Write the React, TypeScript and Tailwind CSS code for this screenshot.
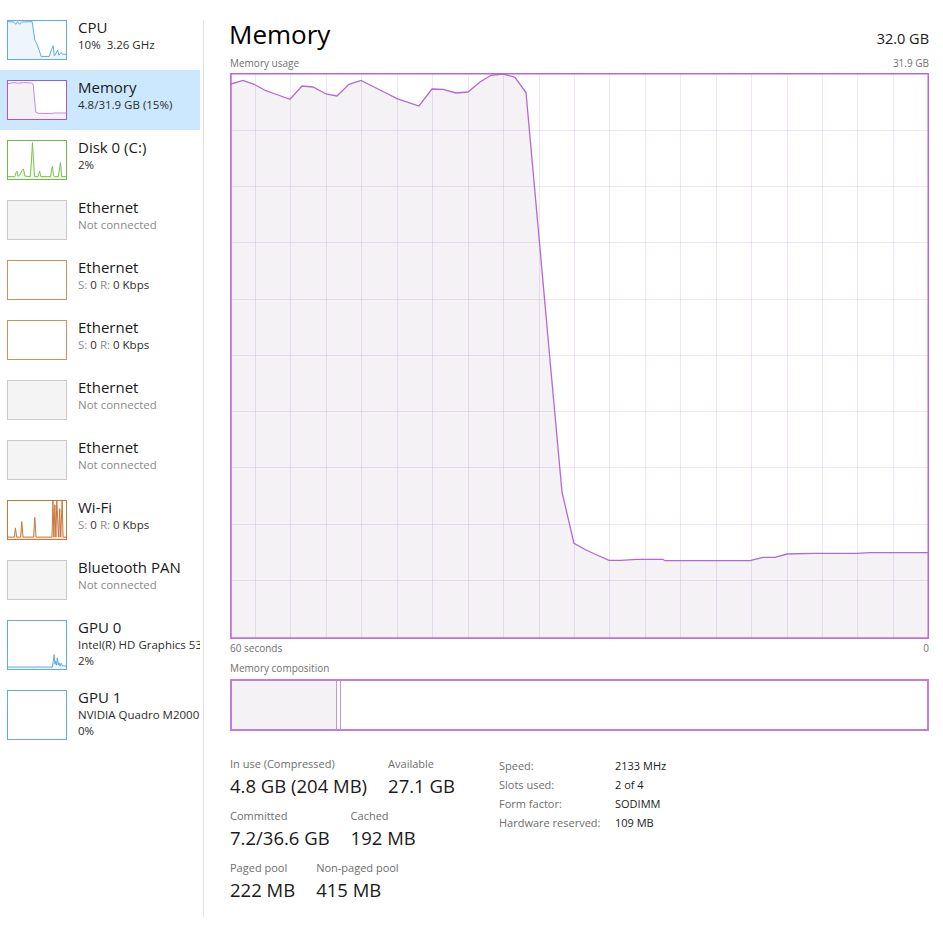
import React from 'react';

type Item = {
  title: string;
  sub: React.ReactNode[];
  box: string;
  h?: number;
  spark?: { points: string; line: string; fill: string };
  selected?: boolean;
};

const gray = 'text-[#8a8a8a]';

const SR = () => (
  <span>
    <span className={gray}>S:</span> 0 <span className={gray}>R:</span> 0 Kbps
  </span>
);

const items: Item[] = [
  {
    title: 'CPU',
    sub: ['10%  3.26 GHz'],
    box: 'border-[#62acdb] bg-white',
    spark: {
      points:
        '0,0.7 6,1 8,3.5 10,0.7 12,3.5 14,1 25,0.7 27.7,20 29.3,22.7 32,30 34.3,37.3 42.7,37.3 45,30 46.7,26 48,36.7 50,33.3 51.3,30.7 52.7,36 54.7,33.3 56.7,35 60,35',
      line: '#62acdb',
      fill: '#eef5fb',
    },
  },
  {
    title: 'Memory',
    sub: ['4.8/31.9 GB (15%)'],
    box: 'border-[#aa55cc] bg-white',
    selected: true,
    spark: {
      points: '0,2.7 6,1.7 11,2.3 16,1.7 24.3,2 26,3.3 28.7,32.7 31,34 44.3,34.3 47.7,33.7 60,33.7',
      line: '#c58be0',
      fill: '#f4f2f4',
    },
  },
  {
    title: 'Disk 0 (C:)',
    sub: ['2%'],
    box: 'border-[#72b84a] bg-white',
    spark: {
      points:
        '0,37.5 7,37.5 8.5,33 9.3,31.7 10.5,37 12,36 14.5,31 16,29.3 17.5,37 23,37.5 24.3,20 25.3,1.7 26.5,22 27.5,37.5 31,37.5 32.7,31.7 34,37.5 44,37.5 45,30 46,26.7 47,36 48,37.5 52,37.5 53.5,28 54.3,22.7 55.5,37.5 60,37.5',
      line: '#7cc150',
      fill: '#f1f8ec',
    },
  },
  { title: 'Ethernet', sub: [<span className={gray}>Not connected</span>], box: 'border-[#cacaca] bg-[#f4f4f4]' },
  { title: 'Ethernet', sub: [<SR />], box: 'border-[#d08f5c] bg-white' },
  { title: 'Ethernet', sub: [<SR />], box: 'border-[#d08f5c] bg-white' },
  { title: 'Ethernet', sub: [<span className={gray}>Not connected</span>], box: 'border-[#cacaca] bg-[#f4f4f4]' },
  { title: 'Ethernet', sub: [<span className={gray}>Not connected</span>], box: 'border-[#cacaca] bg-[#f4f4f4]' },
  {
    title: 'Wi-Fi',
    sub: [<SR />],
    box: 'border-[#c8773b] bg-white',
    spark: {
      points:
        '0,38 6.5,38 7.7,28.3 9,38 13,38 14.3,21.7 15.5,38 26.5,38 27.7,17.3 29,38 45.5,38 46.5,0 47.5,38 48.5,4 49.5,38 50.5,0 51.5,20 52.5,38 53.5,8 54.5,38 56,0 57,38 60,38',
      line: '#c8773b',
      fill: '#f8e9de',
    },
  },
  { title: 'Bluetooth PAN', sub: [<span className={gray}>Not connected</span>], box: 'border-[#cacaca] bg-[#f4f4f4]' },
  {
    title: 'GPU 0',
    sub: ['Intel(R) HD Graphics 530', '2%'],
    box: 'border-[#62acdb] bg-white',
    h: 50,
    spark: {
      points:
        '0,48 30.5,48 31,47.3 31.5,48 46,48 47.7,35 48.5,45 49.3,41.7 50.2,46 51,38.3 52,46 52.7,43.3 54,47 55,44 56.5,47 57.7,46.5 60,47',
      line: '#62acdb',
      fill: '#eef5fb',
    },
  },
  { title: 'GPU 1', sub: ['NVIDIA Quadro M2000M', '0%'], box: 'border-[#62acdb] bg-white', h: 50 },
];

function Spark({ points, line, fill, h }: { points: string; line: string; fill: string; h: number }) {
  return (
    <svg viewBox={`0 0 60 ${h}`} preserveAspectRatio="none" className="block w-full h-full">
      <polygon points={`0,${h} ${points} 60,${h}`} fill={fill} />
      <polyline points={points} fill="none" stroke={line} strokeWidth="1" vectorEffect="non-scaling-stroke" />
    </svg>
  );
}

function SideItem({ it }: { it: Item }) {
  const h = it.h ?? 40;
  return (
    <div
      className={`flex pl-[7px] overflow-hidden whitespace-nowrap ${h === 50 ? 'h-[70px]' : 'h-[60px]'} ${
        it.selected ? 'bg-[#cce8ff]' : ''
      }`}
    >
      <div className={`mt-[10px] w-[60px] shrink-0 border ${h === 50 ? 'h-[50px]' : 'h-[40px]'} ${it.box}`}>
        {it.spark && <Spark {...it.spark} h={h} />}
      </div>
      <div className="ml-[11px] pt-[7px] min-w-0">
        <div className="text-[15px] leading-[20px] text-[#1a1a1a]">{it.title}</div>
        {it.sub.map((s, i) => (
          <div key={i} className="text-[11.5px] leading-[16px] text-[#2b2b2b] whitespace-pre">
            {s}
          </div>
        ))}
      </div>
    </div>
  );
}

const linePts: [number, number][] = [
  [230, 84.3], [243, 80.5], [254, 84.3], [266, 90.7], [278, 95], [290, 99.3], [302, 86], [313, 87], [326, 94],
  [337, 96], [349, 84.3], [361, 80.5], [373, 86.5], [385, 92.5], [397, 98.7], [408, 102.3], [419, 106], [432, 89],
  [443, 89.3], [456, 93], [468, 92], [480, 82], [491, 75.3], [503, 74], [515, 77.3], [526, 92.5], [538, 226],
  [550, 360], [562, 492], [574, 543.3], [586, 550], [597, 555], [609, 560.3], [621, 560.3], [636, 559.3],
  [663, 559.3], [665, 560.7], [750, 560.7], [763, 557.3], [775, 557.3], [787, 554], [813, 553.3], [857, 553.3],
  [870, 552.7], [929, 552.7],
];

function Chart() {
  const pts = linePts.map(([x, y]) => `${x},${y}`).join(' ');
  const vx = Array.from({ length: 19 }, (_, k) => Math.round(255 + k * 35.44) + 0.5);
  const hy = Array.from({ length: 9 }, (_, k) => Math.round(73.3 + (k + 1) * 56.3) + 0.5);
  return (
    <svg width="699" height="566" viewBox="230 73 699 566" className="block">
      <polygon points={`${pts} 929,639 230,639`} fill="#f4f2f4" />
      {vx.map((x) => (
        <line key={'v' + x} x1={x} y1={73} x2={x} y2={639} stroke="rgba(170,90,200,0.16)" strokeWidth="1" />
      ))}
      {hy.map((y) => (
        <line key={'h' + y} x1={230} y1={y} x2={929} y2={y} stroke="rgba(170,90,200,0.16)" strokeWidth="1" />
      ))}
      <polyline points={pts} fill="none" stroke="#b468d6" strokeWidth="1.3" />
      <rect x="230.9" y="73.7" width="697.4" height="564.4" fill="none" stroke="#b469d6" strokeWidth="1.6" />
    </svg>
  );
}

function Cell({ label, value }: { label: string; value: string }) {
  return (
    <div className="flex flex-col">
      <div className="text-[11px] leading-[16px] text-[#6e6e6e] whitespace-nowrap">{label}</div>
      <div className="text-[18.5px] leading-[28px] text-[#1a1a1a] whitespace-nowrap">{value}</div>
    </div>
  );
}

export default function App() {
  return (
    <div className="w-[943px] h-[930px] bg-white flex font-['Open_Sans',sans-serif] overflow-hidden">
      <aside className="w-[200px] shrink-0 pt-[10px]">
        {items.map((it, i) => (
          <SideItem key={i} it={it} />
        ))}
      </aside>
      <div className="ml-[3px] mt-[20px] w-px h-[898px] bg-[#e6e6e6] shrink-0" />
      <main className="ml-[26px] w-[699px] shrink-0">
        <div className="pt-[16px] flex items-baseline justify-between">
          <div className="-ml-[1px] text-[26px] leading-[36px] text-black">Memory</div>
          <div className="text-[14.5px] text-[#1a1a1a]">32.0 GB</div>
        </div>
        <div className="mt-[4px] flex justify-between text-[10px] leading-[14px] text-[#707070]">
          <span>Memory usage</span>
          <span>31.9 GB</span>
        </div>
        <div className="mt-[3px]">
          <Chart />
        </div>
        <div className="mt-[2px] flex justify-between text-[10px] leading-[14px] text-[#707070]">
          <span>60 seconds</span>
          <span>0</span>
        </div>
        <div className="mt-[6px] text-[10px] leading-[14px] text-[#707070]">Memory composition</div>
        <div className="mt-[4px] h-[52px] border-2 border-[#bf7edc] flex">
          <div className="w-[105px] bg-[#f4f2f4] border-r border-[#c992e0]" />
          <div className="w-[4px] border-r border-[#c992e0]" />
        </div>
        <div className="mt-[25px] flex items-start">
          <div className="w-[269px] flex flex-col gap-[8px]">
            <div className="flex gap-[21px]">
              <Cell label="In use (Compressed)" value="4.8 GB (204 MB)" />
              <Cell label="Available" value="27.1 GB" />
            </div>
            <div className="flex gap-[21px]">
              <Cell label="Committed" value="7.2/36.6 GB" />
              <Cell label="Cached" value="192 MB" />
            </div>
            <div className="flex gap-[21px]">
              <Cell label="Paged pool" value="222 MB" />
              <Cell label="Non-paged pool" value="415 MB" />
            </div>
          </div>
          <div className="grid grid-cols-[116px_auto] content-start text-[11px] leading-[19px]">
            <span className="text-[#6e6e6e]">Speed:</span>
            <span className="text-[#1a1a1a]">2133 MHz</span>
            <span className="text-[#6e6e6e]">Slots used:</span>
            <span className="text-[#1a1a1a]">2 of 4</span>
            <span className="text-[#6e6e6e]">Form factor:</span>
            <span className="text-[#1a1a1a]">SODIMM</span>
            <span className="text-[#6e6e6e]">Hardware reserved:</span>
            <span className="text-[#1a1a1a]">109 MB</span>
          </div>
        </div>
      </main>
    </div>
  );
}
